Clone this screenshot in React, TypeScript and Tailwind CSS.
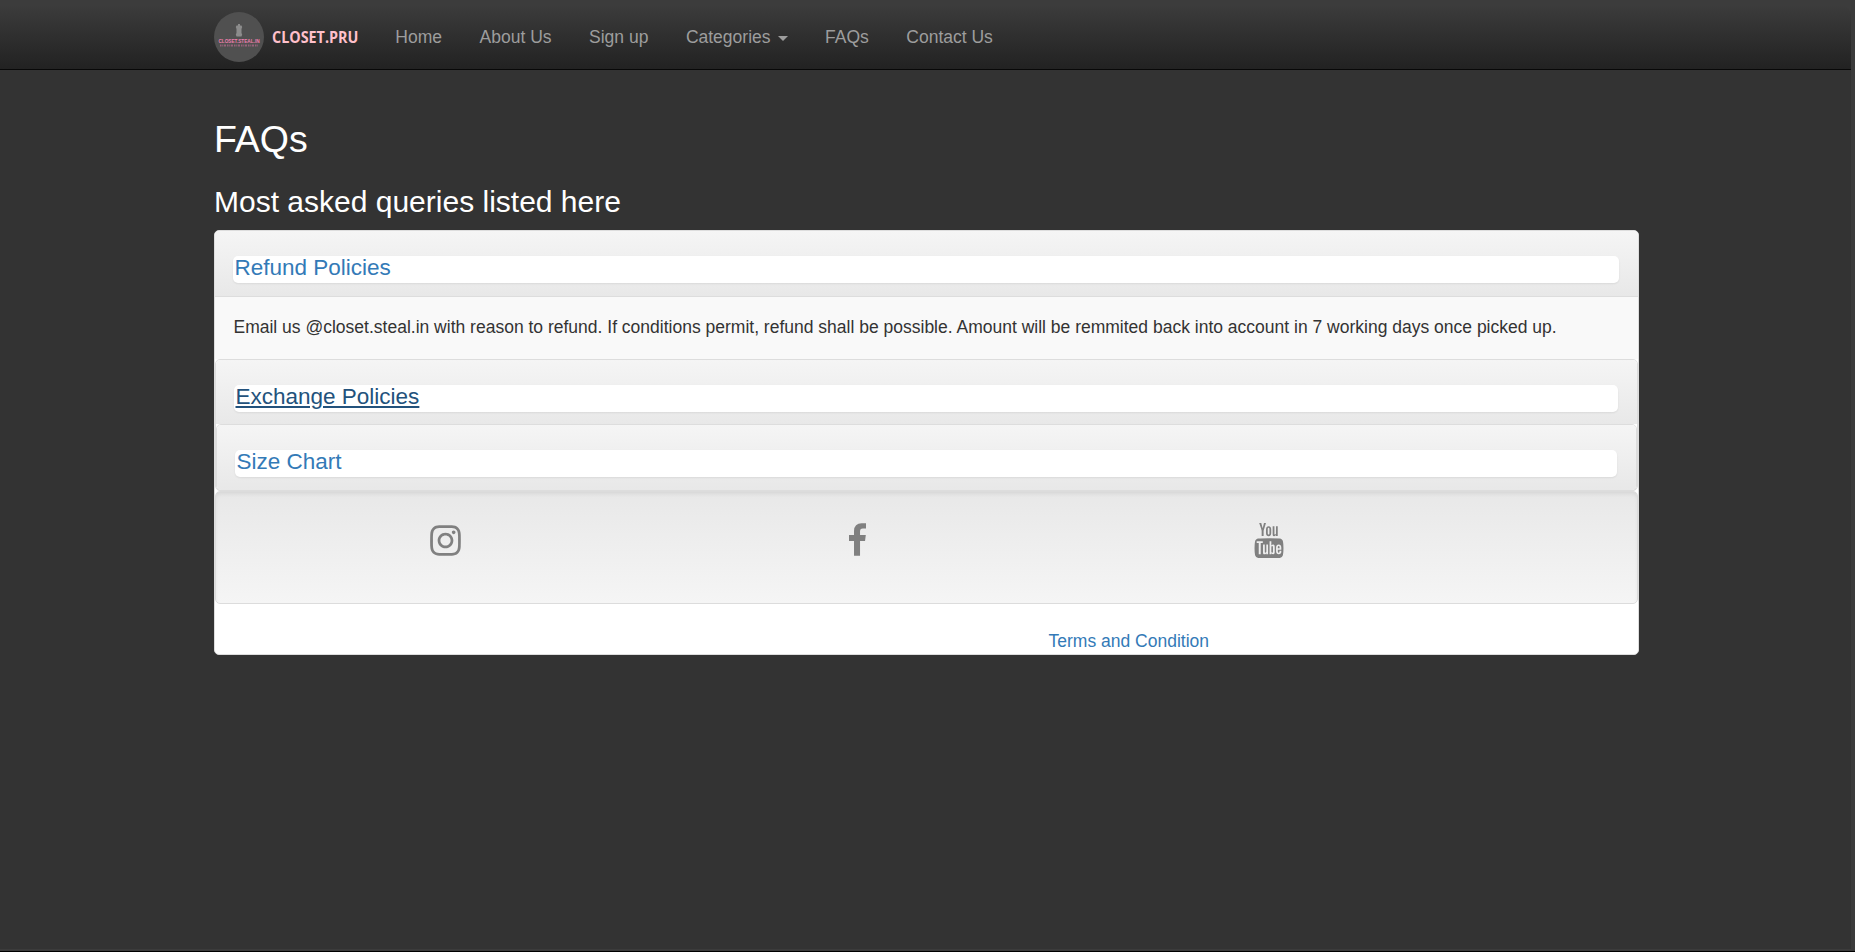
import type { ReactNode } from "react";
import { FaInstagram } from "react-icons/fa";

function NavLink({ children }: { children: ReactNode }) {
  return (
    <a href="#" className="flex items-center px-[18.75px] text-[17.5px] leading-[25px] text-[#9d9d9d]">
      {children}
    </a>
  );
}

function Logo() {
  return (
    <svg width="50" height="50" viewBox="0 0 50 50" className="block shrink-0 overflow-visible">
      <circle cx="25" cy="25" r="25" fill="#505050" />
      <path d="M24 12h2v1.500h1.500l.7 1.500-.7 2v4l.7 1.500-.7 2H22.500l-.7-2 .7-1.500v-4l-.7-2 .7-1.500H24z" fill="#8c8c8c" />
      <text x="25" y="30.700" textAnchor="middle" fontFamily="Liberation Sans, sans-serif" fontWeight="700" fontSize="4.700" fill="#ee7fae">
        CLOSET.STEAL.IN
      </text>
      <path d="M6 33.500h38" stroke="#95637a" strokeWidth="2" strokeDasharray="1.500 .8 1 .7 2 1" />
    </svg>
  );
}

function FacebookF() {
  return (
    <svg width="17" height="33" viewBox="95 0 864 1664" fill="#808080" className="block">
      <path d="M959 12v264h-157q-86 0-116 36t-30 108v189h293l-39 296h-254v759h-306v-759h-255v-296h255v-218q0-186 104-288.500t277-102.500q147 0 228 12z" />
    </svg>
  );
}

function YoutubeOld() {
  return (
    <svg width="30" height="35" viewBox="0 0 1536 1792" fill="#808080" className="block">
      <path d="M971 1244v211q0 67-39 67-23 0-45-22v-301q22-22 45-22 39 0 39 67zM1309 1245v46h-90v-46q0-68 45-68t45 68zM343 1029h107v-94h-312v94h105v569h100v-569zM631 1598h89v-494h-89v378q-30 42-57 42-18 0-21-21-1-3-1-35v-364h-89v391q0 49 8 73 12 37 58 37 48 0 102-61v54zM1060 1450v-197q0-73-9-99-17-56-71-56-50 0-93 54v-217h-89v663h89v-48q45 55 93 55 54 0 71-55 9-27 9-100zM1398 1440v-13h-91q0 51-2 61-7 36-40 36-46 0-46-69v-87h179v-103q0-79-27-116-39-51-106-51-68 0-107 51-28 37-28 116v173q0 79 29 116 39 51 108 51 72 0 108-53 18-27 21-54 2-9 2-58zM790 525v-210q0-69-43-69t-43 69v210q0 70 43 70t43-70zM1509 1292q0 234-26 350-14 59-58 99t-102 46q-184 21-555 21t-555-21q-58-6-102.500-46t-57.500-99q-26-112-26-350 0-234 26-350 14-59 58-99t103-47q183-20 554-20t555 20q58 7 102.500 47t57.500 99q26 112 26 350zM511 0h102l-121 399v271h-100v-271q-14-74-61-212-37-103-65-187h106l71 263zM881 333v175q0 81-28 118-38 51-106 51-67 0-105-51-28-38-28-118v-175q0-80 28-117 38-51 105-51 68 0 106 51 28 37 28 117zM1216 170v499h-91v-55q-53 62-103 62-46 0-59-37-8-24-8-75v-394h91v367q0 33 1 35 3 22 21 22 27 0 57-43v-381h91z" />
    </svg>
  );
}

function Heading({ title, active = false }: { title: string; active?: boolean }) {
  return (
    <div className="bg-linear-to-b from-[#f5f5f5] to-[#e8e8e8] pt-[25px] pr-[19px] pb-[13px] pl-[18px]">
      <h4 className="h-[27px] rounded-[5px] bg-white pl-[1.500px] text-[22.500px] leading-[24px] shadow-[0_1px_2px_rgba(0,0,0,0.075)]">
        <a href="#" className={active ? "text-[#23527c] underline" : "text-[#337ab7]"}>
          {title}
        </a>
      </h4>
    </div>
  );
}

export default function App() {
  return (
    <div className="h-[952px] overflow-hidden border-b border-black bg-[#3b3b3b] pr-1 pb-[2px] font-['Liberation_Sans',Arial,sans-serif] text-[17.500px] leading-[25px] text-[#333]">
      <div className="h-full bg-[#333]">
        <div className="border-b border-[#080808] bg-[#3c3c3c] pt-[5px]">
          <nav className="flex h-16 items-center rounded-tr-[10px] bg-linear-to-b from-[#3c3c3c] to-[#222] pl-[214px]">
            <Logo />
            <a href="#" className="mr-[19.600px] ml-[8px] w-[85px] font-['Open_Sans',sans-serif] text-[15.500px] font-bold whitespace-nowrap text-[#ffc0cb]">
              <span className="inline-block origin-left scale-x-[0.925]">CLOSET.PRU</span>
            </a>
            <NavLink>Home</NavLink>
            <NavLink>About Us</NavLink>
            <NavLink>Sign up</NavLink>
            <NavLink>
              Categories
              <span className="mt-[3px] ml-[7px] border-x-[5px] border-t-[5px] border-x-transparent border-t-[#9d9d9d]" />
            </NavLink>
            <NavLink>FAQs</NavLink>
            <NavLink>Contact Us</NavLink>
          </nav>
        </div>

        <main className="ml-[214px] w-[1425px] pt-[49px]">
          <h2 className="text-[37.500px] leading-[41px] text-white">FAQs</h2>
          <h3 className="mt-6 mb-[10px] text-[30px] leading-[36px] text-white">Most asked queries listed here</h3>

          <section className="h-[425px] overflow-hidden rounded-[5px] border border-[#ddd] bg-white">
            <Heading title="Refund Policies" />
            <div className="h-[63px] border-t border-[#ddd] bg-[#f9f9f9] px-[18.500px] pt-[18px]">
              Email us @closet.steal.in with reason to refund. If conditions permit, refund shall be possible. Amount will be remmited back into account in 7 working days once picked up.
            </div>
            <div className="h-[132px] rounded-[5px] border border-[#ddd] bg-white">
              <div className="h-[64px] overflow-hidden rounded-t-[4px]">
                <Heading title="Exchange Policies" active />
              </div>
              <div className="h-[67px] overflow-hidden rounded-[5px] border border-[#ddd]">
                <Heading title="Size Chart" />
              </div>
            </div>
            <footer className="flex h-[113px] rounded-[5px] border border-[#dcdcdc] bg-linear-to-b from-[#e8e8e8] to-[#f5f5f5] pt-[31px] shadow-[inset_0_3px_5px_-2px_rgba(0,0,0,0.1)]">
              <a href="#" className="ml-[208px] w-[425px] pl-[4px]">
                <FaInstagram size={35} color="#808080" />
              </a>
              <a href="#" className="w-[405px]">
                <FacebookF />
              </a>
              <a href="#">
                <YoutubeOld />
              </a>
            </footer>
            <div className="pt-[25px] pl-[833.500px]">
              <a href="#" className="text-[#337ab7]">Terms and Condition</a>
            </div>
          </section>
        </main>
      </div>
    </div>
  );
}
